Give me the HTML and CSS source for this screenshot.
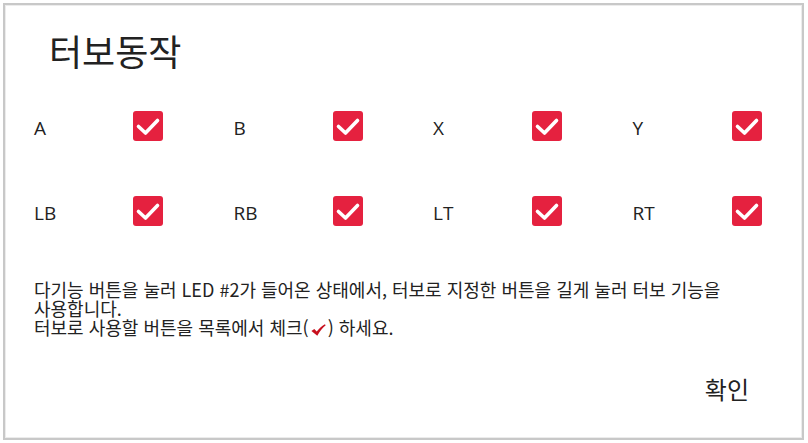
FILE: index.html
```html
<!DOCTYPE html>
<html lang="ko">
<head>
<meta charset="utf-8">
<link rel="stylesheet" href="styles.css">
</head>
<body>
<div class="dialog">
  <h1 class="title">터보동작</h1>
  <div class="grid">
    <div class="cell"><span class="label">A</span><span class="box"><svg viewBox="0 0 30 30"><path d="M5.5 15.5 L12.5 22 L24.5 9.5"/></svg></span></div>
    <div class="cell"><span class="label">B</span><span class="box"><svg viewBox="0 0 30 30"><path d="M5.5 15.5 L12.5 22 L24.5 9.5"/></svg></span></div>
    <div class="cell"><span class="label">X</span><span class="box"><svg viewBox="0 0 30 30"><path d="M5.5 15.5 L12.5 22 L24.5 9.5"/></svg></span></div>
    <div class="cell"><span class="label">Y</span><span class="box"><svg viewBox="0 0 30 30"><path d="M5.5 15.5 L12.5 22 L24.5 9.5"/></svg></span></div>
    <div class="cell"><span class="label">LB</span><span class="box"><svg viewBox="0 0 30 30"><path d="M5.5 15.5 L12.5 22 L24.5 9.5"/></svg></span></div>
    <div class="cell"><span class="label">RB</span><span class="box"><svg viewBox="0 0 30 30"><path d="M5.5 15.5 L12.5 22 L24.5 9.5"/></svg></span></div>
    <div class="cell"><span class="label">LT</span><span class="box"><svg viewBox="0 0 30 30"><path d="M5.5 15.5 L12.5 22 L24.5 9.5"/></svg></span></div>
    <div class="cell"><span class="label">RT</span><span class="box"><svg viewBox="0 0 30 30"><path d="M5.5 15.5 L12.5 22 L24.5 9.5"/></svg></span></div>
  </div>
  <p class="desc">다기능 버튼을 눌러 LED #2가 들어온 상태에서, 터보로 지정한 버튼을 길게 눌러 터보 기능을<br>사용합니다.<br>터보로 사용할 버튼을 목록에서 체크(<svg class="tick" viewBox="0 0 15 12"><path d="M0.4 6.9 L3.3 5.1 L5.7 7.6 C8 4.6 10.6 2 13.9 0.3 L14.7 1.3 C11.2 4 8.6 7.6 6.3 11.7 Z"/></svg>) 하세요.</p>
  <div class="footer"><span class="ok">확인</span></div>
</div>
</body>
</html>
```

FILE: styles.css
```css
html, body {
  margin: 0;
  padding: 0;
  background: #ffffff;
}
body {
  padding: 3px;
  font-family: "Open Sans", "Noto Sans CJK KR", sans-serif;
  color: #222222;
}
.dialog {
  box-sizing: border-box;
  width: 801px;
  height: 437px;
  border: 2px solid #c8c8c8;
  box-shadow: inset 0 0 0 1px #ececec;
  padding: 0 0 0 29px;
  display: flex;
  flex-direction: column;
}
.title {
  margin: 21px 0 0 15px;
  font-family: "Noto Sans CJK KR", sans-serif;
  font-weight: 400;
  font-size: 36px;
  line-height: 48px;
  color: #222222;
}
.grid {
  margin-top: 37px;
  display: grid;
  grid-template-columns: 199.5px 199.5px 199.5px 130px;
  row-gap: 55px;
}
.cell {
  display: flex;
  align-items: center;
  height: 30px;
}
.label {
  width: 99px;
  font-size: 19px;
  line-height: 24px;
  padding-top: 3px;
  color: #222222;
}
.box {
  width: 30px;
  height: 30px;
  border-radius: 3px;
  background: #e5213f;
  display: block;
}
.box svg {
  display: block;
  width: 30px;
  height: 30px;
}
.box path {
  fill: none;
  stroke: #ffffff;
  stroke-width: 3.6;
  stroke-linecap: round;
  stroke-linejoin: round;
}
.desc {
  margin: 54px 0 0 0;
  font-family: "Noto Sans CJK KR", sans-serif;
  font-size: 18px;
  line-height: 19px;
  color: #222222;
}
.tick {
  width: 15px;
  height: 12px;
  vertical-align: -1px;
  margin: 0 2px;
}
.tick path {
  fill: #c8101e;
}
.footer {
  margin-top: auto;
  display: flex;
  justify-content: flex-end;
  padding: 0 53px 34px 0;
}
.ok {
  font-family: "Noto Sans CJK KR", sans-serif;
  font-size: 24px;
  line-height: 30px;
  color: #222222;
}
```
